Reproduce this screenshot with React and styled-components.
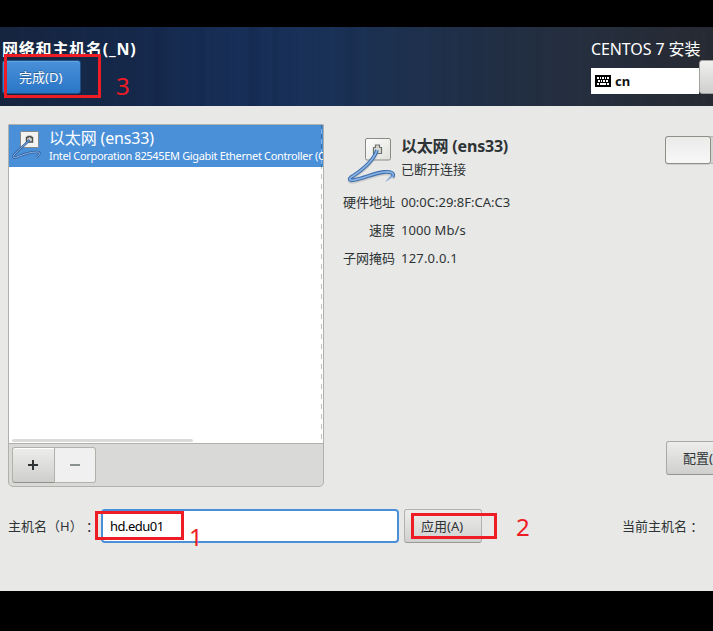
import React from 'react';
import styled, { createGlobalStyle } from 'styled-components';

const Global = createGlobalStyle`
  * { box-sizing: border-box; }
  body { margin: 0; background: #000; overflow: hidden; }
`;

const Screen = styled.div`
  position: relative;
  width: 713px;
  height: 631px;
  padding: 27px 0 40px;
  display: flex;
  flex-direction: column;
  overflow: hidden;
  background: #000;
  color: #2e3436;
  font-family: 'Noto Sans', 'Noto Sans CJK SC', sans-serif;
  font-size: 13px;
`;

const Text = styled.span`
  display: block;
  white-space: pre;
  text-spacing-trim: space-all;
  font-size: ${(p) => p.$size || 13}px;
  line-height: ${(p) => p.$line || 20}px;
  font-weight: ${(p) => (p.$bold ? 700 : 400)};
  letter-spacing: ${(p) => p.$spacing || 0}px;
  color: ${(p) => p.$color || 'inherit'};
`;

const Colon = styled.span`
  font-family: 'Noto Sans CJK TC', sans-serif;
  line-height: 1;
  vertical-align: -1px;
`;

const Header = styled.header`
  flex: none;
  height: 79px;
  display: flex;
  justify-content: space-between;
  color: #fff;
  background:
    linear-gradient(90deg, transparent 150px, rgba(5, 15, 45, 0.1) 158px, transparent 166px 196px, rgba(5, 15, 45, 0.09) 201px, transparent 207px 246px, rgba(5, 15, 45, 0.13) 252px, transparent 262px 270px, rgba(5, 15, 45, 0.1) 275px, transparent 282px 340px, rgba(5, 15, 45, 0.06) 350px, transparent 362px),
    repeating-linear-gradient(90deg, transparent 0 7px, rgba(5, 15, 45, 0.04) 10px, transparent 13px 19px, rgba(50, 100, 165, 0.03) 22px, transparent 25px 31px),
    linear-gradient(90deg, #16253f 0, #15284a 130px, #172e56 235px, #193157 320px, #1d304d 410px, #212e43 500px, #252e3d 590px, #272a32 713px);
`;

const HeaderLeft = styled.div`
  padding: 12px 0 0 2px;
`;

const DoneButton = styled.button`
  display: flex;
  align-items: center;
  width: 79px;
  height: 34px;
  margin: 1px 0 0;
  padding: 0 0 0 16px;
  border: 1px solid #1c5187;
  border-radius: 3px;
  color: #fff;
  font: inherit;
  background: linear-gradient(#4a90d9, #2a76c6);
  box-shadow: inset 0 1px #63a2e1;
  text-shadow: 0 -1px rgba(0, 0, 0, 0.3);
`;

const HeaderRight = styled.div`
  width: 122px;
  padding-top: 12px;
`;

const KeyboardRow = styled.div`
  display: flex;
  margin-top: 1px;
`;

const KeyboardBox = styled.div`
  flex: none;
  display: flex;
  align-items: center;
  gap: 4px;
  width: 108px;
  height: 26px;
  margin-top: 8px;
  padding-left: 4px;
  color: #111;
  background: #fff;
`;

const HelpButton = styled.div`
  flex: none;
  width: 20px;
  height: 34px;
  border: 1px solid #a1a19f;
  border-radius: 3px;
  background: linear-gradient(#f0f0ef, #cfcfcd);
`;

const Body = styled.main`
  flex: 1;
  padding: 18px 0 0 8px;
  background: #e8e8e6;
`;

const Columns = styled.div`
  display: flex;
  height: 363px;
`;

const ListPanel = styled.section`
  flex: none;
  width: 316px;
  display: flex;
  flex-direction: column;
  overflow: hidden;
  border: 1px solid #b0b0ac;
  border-radius: 1px 1px 5px 5px;
  background: #d9d9d7;
`;

const List = styled.div`
  flex: none;
  position: relative;
  height: 318px;
  background: #fff;
`;

const DashedEdge = styled.div`
  position: absolute;
  top: 0;
  right: 1px;
  width: 1px;
  height: 100%;
  background: repeating-linear-gradient(rgba(0, 0, 0, 0.24) 0 4px, rgba(255, 255, 255, 0.3) 4px 9px, rgba(0, 0, 0, 0.24) 9px 10px);
`;

const ScrollThumb = styled.div`
  position: absolute;
  left: 3px;
  bottom: 1px;
  width: 181px;
  height: 3px;
  border-radius: 2px;
  background: #dadad9;
`;

const DeviceRow = styled.div`
  display: flex;
  height: 42px;
  padding: 3px 0 0 2px;
  overflow: hidden;
  color: #fff;
  background: #4a90d9;
`;

const DeviceIcon = styled.div`
  flex: none;
  width: 38px;
`;

const DeviceLabels = styled.div`
  flex: none;
`;

const ListActions = styled.div`
  flex: 1;
  display: flex;
  padding: 3px;
  border-top: 1px solid #b0b0ac;
`;

const ActionButton = styled.button`
  display: flex;
  align-items: center;
  justify-content: center;
  width: ${(p) => (p.$disabled ? 41 : 43)}px;
  height: 36px;
  padding: ${(p) => (p.$disabled ? 0 : '0 2px 0 0')};
  border: 1px solid #b2b2ac;
  border-left-width: ${(p) => (p.$disabled ? 0 : 1)}px;
  border-bottom-color: ${(p) => (p.$disabled ? '#b2b2ac' : '#8f8f8b')};
  border-radius: ${(p) => (p.$disabled ? '0 3px 3px 0' : '3px 0 0 3px')};
  background: ${(p) => (p.$disabled ? '#f0f0f0' : 'linear-gradient(#ededeb, #cececc)')};
  box-shadow: ${(p) => (p.$disabled ? 'none' : 'inset 0 1px #fff')};
`;

const Details = styled.section`
  flex: 1;
  min-width: 0;
  padding: 12px 0 0 18px;
  overflow: hidden;
`;

const DetailsHead = styled.div`
  display: flex;
  height: 56px;
`;

const DetailsIcon = styled.div`
  flex: none;
  width: 59px;
  padding-left: 5px;
`;

const DetailsTitle = styled.div`
  flex: none;
  width: 264px;
`;

const Switch = styled.div`
  flex: none;
  width: 90px;
  height: 28px;
  border: 1px solid #b5b5b1;
  border-radius: 3px;
  background: #d3d3d0;
`;

const SwitchKnob = styled.div`
  width: 46px;
  height: 28px;
  margin: -1px;
  border: 1px solid #8f8f8a;
  border-radius: 3px;
  background: linear-gradient(#ebebea, #f8f8f8);
  box-shadow: 0 1px #d0d0ce;
`;

const Facts = styled.div`
  display: grid;
  grid-template-columns: 53px auto;
  grid-auto-rows: 28px;
  column-gap: 6px;

  & > span:nth-child(odd) { justify-self: end; }
`;

const ConfigureButton = styled.button`
  display: flex;
  align-items: center;
  width: 94px;
  height: 34px;
  margin: 165px 0 0 324px;
  padding: 0 0 0 16px;
  border: 1px solid #aaa9a5;
  border-bottom-color: #93938f;
  border-radius: 3px;
  color: inherit;
  font: inherit;
  background: linear-gradient(#ededeb, #cfcfcd);
`;

const HostRow = styled.div`
  display: flex;
  align-items: center;
  height: 34px;
  margin-top: 22px;
`;

const HostLabel = styled.div`
  flex: none;
  width: 93px;
`;

const HostInput = styled.div`
  flex: none;
  display: flex;
  align-items: center;
  width: 298px;
  height: 34px;
  padding-left: 7px;
  border: 2px solid #4a90d9;
  border-radius: 4px;
  color: #000;
  background: #fff;
`;

const ApplyButton = styled.button`
  flex: none;
  display: flex;
  align-items: center;
  width: 78px;
  height: 34px;
  margin: 0 140px 0 5px;
  padding: 0 0 0 16px;
  border: 1px solid #b2b2ae;
  border-bottom-color: #999995;
  border-radius: 3px;
  color: inherit;
  font: inherit;
  background: linear-gradient(#ededeb, #d0d0ce);
`;

const Mark = styled.div`
  position: absolute;
  left: ${(p) => p.$x}px;
  top: ${(p) => p.$y}px;
  width: ${(p) => p.$w}px;
  height: ${(p) => p.$h}px;
  border: 3px solid #ee1c24;
`;

const MarkNumber = styled.div`
  position: absolute;
  left: ${(p) => p.$x}px;
  top: ${(p) => p.$y}px;
  color: #ee1c24;
  font-size: 24px;
  line-height: 28px;
`;

function WiredIcon() {
  const cable = 'M30 14C27 24 18 32 6 40C1 43 2 45 7 44C18 42 27 37 37 36C44 35.5 48 37 45.5 41';
  return (
    <svg width="50" height="50" viewBox="0 0 50 50" fill="none">
      <defs>
        <linearGradient id="plate" x1="0" y1="0" x2="1" y2="1">
          <stop stopColor="#fff" />
          <stop offset="1" stopColor="#deded9" />
        </linearGradient>
      </defs>
      <rect x="18.5" y="2.5" width="25" height="21.5" rx="1.5" fill="url(#plate)" stroke="#898c86" />
      <path d="M26.5 17.5V11.5H28.5V9H32.5V11.5H34.5V17.5Z" fill="#d9dad6" stroke="#6f716d" strokeWidth="1.2" />
      <path d={cable} stroke="#8b8f91" strokeOpacity=".3" strokeWidth="4" transform="translate(0 1.5)" />
      <path d={cable} stroke="#3f6fae" strokeWidth="3.8" />
      <path d={cable} stroke="#8ab4e3" strokeWidth="1.6" />
      <path d="M47 39C45 42 42 44 38 46L43 40Z" fill="#6d99cf" fillOpacity=".7" />
    </svg>
  );
}

function SmallWiredIcon() {
  const cable = 'M18.5 12C14 17 8 21 3 27C1 30 3 30 6 29C13 26 20 24 26 24C30 24 29 27 25 29.5';
  return (
    <svg width="32" height="32" viewBox="0 0 32 32" fill="none">
      <rect x="9.5" y="3.5" width="18" height="16" rx="1" fill="#f3f3f1" stroke="#85898a" />
      <path d="M15.5 14V9.5H17V8.5H20V9.5H21.5V14Z" fill="#d9dad6" stroke="#4d504c" strokeWidth="1.4" />
      <path d={cable} stroke="#2f5f9e" strokeWidth="2.4" />
      <path d={cable} stroke="#8ab4e3" strokeWidth="1" />
    </svg>
  );
}

function KeyboardIcon() {
  return (
    <svg width="16" height="12" viewBox="0 0 16 12" shapeRendering="crispEdges">
      <rect width="16" height="12" rx="1" fill="#000" />
      <path fill="#fff" d="M2 2h2v2H2zM5 2h1v2H5zM7 2h2v2H7zM10 2h1v2h-1zM12 2h2v2h-2zM3 5h2v2H3zM6 5h1v2H6zM8 5h2v2H8zM11 5h2v2h-2zM2 8h2v2H2zM5 8h6v2H5zM12 8h2v2h-2z" />
    </svg>
  );
}

function SignIcon({ plus }) {
  return (
    <svg width="10" height="10" viewBox="0 0 10 10">
      <path d={plus ? 'M0 4h10v2H0zM4 0h2v10H4z' : 'M0 4h10v2H0z'} fill={plus ? '#2e3436' : '#8b9090'} />
    </svg>
  );
}

export default function App() {
  return (
    <>
      <Global />
      <Screen>
        <Header>
          <HeaderLeft>
            <Text $size={16} $line={20} $bold $spacing={0.8}>网络和主机名(_N)</Text>
            <DoneButton><Text>完成(D)</Text></DoneButton>
          </HeaderLeft>
          <HeaderRight>
            <Text $size={16} $line={20} $spacing={-0.1}>CENTOS 7 安装</Text>
            <KeyboardRow>
              <KeyboardBox>
                <KeyboardIcon />
                <Text $bold>cn</Text>
              </KeyboardBox>
              <HelpButton />
            </KeyboardRow>
          </HeaderRight>
        </Header>
        <Body>
          <Columns>
            <ListPanel>
              <List>
                <DeviceRow>
                  <DeviceIcon><SmallWiredIcon /></DeviceIcon>
                  <DeviceLabels>
                    <Text $size={16} $line={21} $spacing={-0.15}>以太网 (ens33)</Text>
                    <Text $size={11} $line={14} $spacing={-0.34}>Intel Corporation 82545EM Gigabit Ethernet Controller (C</Text>
                  </DeviceLabels>
                </DeviceRow>
                <DashedEdge />
                <ScrollThumb />
              </List>
              <ListActions>
                <ActionButton><SignIcon plus /></ActionButton>
                <ActionButton $disabled><SignIcon /></ActionButton>
              </ListActions>
            </ListPanel>
            <Details>
              <DetailsHead>
                <DetailsIcon><WiredIcon /></DetailsIcon>
                <DetailsTitle>
                  <Text $size={16} $line={21} $bold $spacing={-0.2}>以太网 (ens33)</Text>
                  <Text $line={24}>已断开连接</Text>
                </DetailsTitle>
                <Switch><SwitchKnob /></Switch>
              </DetailsHead>
              <Facts>
                <Text>硬件地址</Text>
                <Text>00:0C:29:8F:CA:C3</Text>
                <Text>速度</Text>
                <Text $spacing={0.1}>1000 Mb/s</Text>
                <Text>子网掩码</Text>
                <Text $spacing={0.2}>127.0.0.1</Text>
              </Facts>
              <ConfigureButton><Text>配置(</Text></ConfigureButton>
            </Details>
          </Columns>
          <HostRow>
            <HostLabel><Text>主机名（H）<Colon>：</Colon></Text></HostLabel>
            <HostInput><Text $spacing={-0.5}>hd.edu01</Text></HostInput>
            <ApplyButton><Text>应用(A)</Text></ApplyButton>
            <Text>当前主机名<Colon>：</Colon></Text>
          </HostRow>
        </Body>
        <Mark $x={4} $y={54} $w={97} $h={44} />
        <Mark $x={95} $y={511} $w={89} $h={29} />
        <Mark $x={411} $y={513} $w={86} $h={26} />
        <MarkNumber $x={116} $y={72}>3</MarkNumber>
        <MarkNumber $x={189} $y={523}>1</MarkNumber>
        <MarkNumber $x={516} $y={513}>2</MarkNumber>
      </Screen>
    </>
  );
}
